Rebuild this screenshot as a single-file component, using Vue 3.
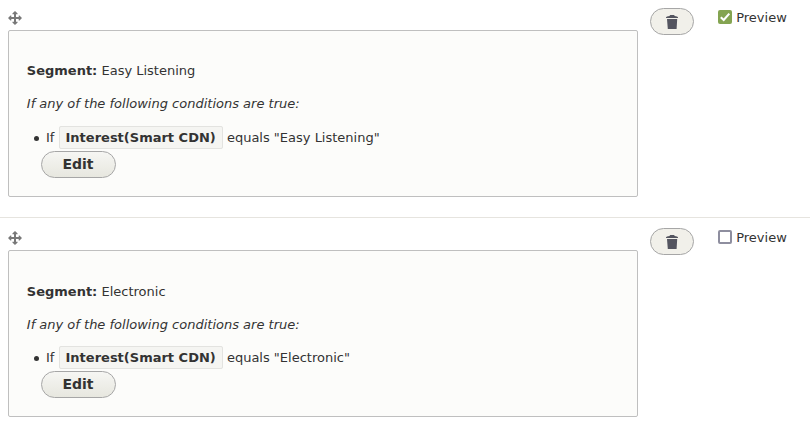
<script setup>
const rows = [
  { name: 'Easy Listening', preview: true },
  { name: 'Electronic', preview: false },
]
</script>

<template>
  <main class="list">
    <section v-for="row in rows" :key="row.name" class="row">
      <div class="content">
        <svg class="handle" width="14" height="14" viewBox="0 0 14 14">
          <path fill="#787878" d="M7 0 9.6 2.5V3.3H8V6H10.7V4.4H11.5L14 7 11.5 9.6H10.7V8H8V10.7H9.6V11.5L7 14 4.4 11.5V10.7H6V8H3.3V9.6H2.5L0 7 2.5 4.4H3.3V6H6V3.3H4.4V2.5Z" />
        </svg>
        <div class="panel">
          <p class="segment"><strong>Segment:</strong> {{ row.name }}</p>
          <p class="hint">If any of the following conditions are true:</p>
          <ul class="conditions">
            <li>If <span class="field">Interest(Smart CDN)</span> equals "{{ row.name }}"</li>
          </ul>
          <button class="edit" type="button">Edit</button>
        </div>
      </div>
      <button class="remove" type="button" aria-label="Remove">
        <svg width="12" height="14" viewBox="0 0 12 14">
          <path fill="#545560" d="M4.2 0H8L8.8 .9 11 1.4 12 2.2V3H0V2.2L1 1.4 3.4 .9ZM1 3.9H11.2L10.6 14H1.8Z" />
        </svg>
      </button>
      <label class="preview">
        <span class="box" :class="{ checked: row.preview }">
          <svg v-if="row.preview" width="14" height="14" viewBox="0 0 14 14">
            <path fill="none" stroke="#fff" stroke-width="2.1" d="M2.8 7.2 5.7 10 11.3 3.6" />
          </svg>
        </span>
        <span class="caption">Preview</span>
      </label>
    </section>
  </main>
</template>

<style>
body {
  margin: 0;
  background: #fff;
}
</style>

<style scoped>
.list {
  height: 425px;
  overflow: hidden;
  color: #333;
  font: 13px/20px "DejaVu Sans", sans-serif;
}
.row {
  box-sizing: border-box;
  display: flex;
  align-items: flex-start;
  height: 220px;
  padding: 10px 0 0 8px;
  border-bottom: 1px solid #e6e4df;
}
.row:first-child {
  height: 218px;
  padding-top: 8px;
}
.row:last-child {
  border-bottom: 0;
}
.content {
  width: 630px;
  margin-right: 12px;
}
.handle {
  display: block;
  margin: 3px 0 5px;
}
.panel {
  box-sizing: border-box;
  height: 167px;
  padding: 30px 18px 0 17.8px;
  border: 1px solid #bfbfbf;
  border-radius: 2px;
  background: #fcfcfa;
}
.row + .row .panel {
  padding-top: 31px;
}
.row + .row .conditions {
  margin-top: 12px;
}
p {
  margin: 0 0 13px;
}
.hint {
  font-style: italic;
  margin: 0;
}
.conditions {
  margin: 13px 0 0;
  padding: 0 0 0 19.2px;
  height: 22px;
  line-height: 22px;
  list-style: none;
}
.conditions li::before {
  content: "";
  display: inline-block;
  width: 5px;
  height: 5px;
  margin: 0 7px 1.5px -12px;
  border-radius: 50%;
  background: #333;
}
.field {
  padding: 3px 6px;
  border: 1px solid #e3e3e0;
  border-radius: 2px;
  background: #f5f5f2;
  font-weight: bold;
}
.edit,
.remove {
  box-sizing: border-box;
  display: flex;
  align-items: center;
  justify-content: center;
  height: 27px;
  padding: 0;
  border: 1px solid #a6a6a6;
  border-radius: 14px;
}
.edit {
  width: 75px;
  margin: 2px 0 0 14.2px;
  padding-right: 1px;
  background: linear-gradient(#f6f6f3, #e7e7df);
  color: #333;
  font: bold 14px/17px "DejaVu Sans", sans-serif;
}
.remove {
  width: 44px;
  margin-right: 24px;
  background: #f1f0ea;
}
.preview {
  display: flex;
  align-items: center;
  gap: 4.2px;
  height: 18px;
}
.caption {
  padding-top: 2px;
}
.box {
  box-sizing: border-box;
  width: 14px;
  height: 14px;
  border: 2px solid #8e8e9f;
  border-radius: 2px;
  background: #fff;
}
.box.checked {
  border: 0;
  background: #84a451;
}
.box svg {
  display: block;
}
</style>
